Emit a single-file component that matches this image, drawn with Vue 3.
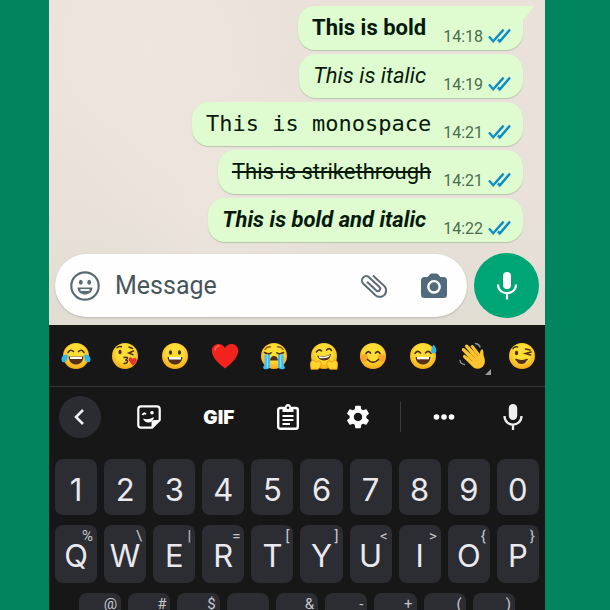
<template>
    <div class="page">
        <main class="phone">
            <section class="chat">
                <ul class="messages">
                    <li
                        v-for="(message, index) in messages"
                        :key="message.text"
                        class="bubble"
                        :class="{ 'has-tail': index === 0 }"
                    >
                        <span class="bubble-text" :class="message.style">{{ message.text }}</span>
                        <span class="bubble-meta">
                            <time>{{ message.time }}</time>
                            <svg class="ticks" width="23" height="16" viewBox="0 0 23 16" fill="none" stroke="#0e8fc4" stroke-width="2.4">
                                <path d="M1 8.5 L5.2 13.2 L15.6 1.6"></path>
                                <path d="M9.8 11.4 L11.8 13.4 L22 1.6"></path>
                            </svg>
                        </span>
                    </li>
                </ul>

                <form class="composer" @submit.prevent>
                    <div class="composer-field">
                        <button type="button" class="plain-button" aria-label="Emoji">
                            <svg width="32" height="32" viewBox="0 0 32 32" fill="none" stroke="#5b6b74" stroke-width="2.2">
                                <circle cx="16" cy="16" r="13.7"></circle>
                                <path d="M8.5 17.5 H23.500 C23 22.500 19.800 24.500 16 24.500 S9 22.500 8.500 17.500 Z" fill="#5b6b74" stroke="none"></path>
                                <path d="M11.5 20 H20.5" stroke="#fff" stroke-width="1.8"></path>
                                <ellipse cx="11.8" cy="12.3" rx="1.9" ry="2.5" fill="#5b6b74" stroke="none"></ellipse>
                                <ellipse cx="20.2" cy="12.3" rx="1.9" ry="2.5" fill="#5b6b74" stroke="none"></ellipse>
                            </svg>
                        </button>
                        <input v-model="draft" class="composer-input" type="text" placeholder="Message" aria-label="Message">
                        <button type="button" class="plain-button" aria-label="Attach">
                            <svg width="32" height="32" viewBox="0 0 24 24" fill="#5b6b74">
                                <g transform="rotate(-47 12 12)">
                                    <path d="M16.5 6v11.5c0 2.21-1.79 4-4 4s-4-1.79-4-4V5a2.5 2.5 0 0 1 5 0v10.5c0 .55-.45 1-1 1s-1-.45-1-1V6H10v9.5a2.5 2.5 0 0 0 5 0V5c0-2.21-1.79-4-4-4S7 2.79 7 5v12.5c0 3.04 2.46 5.5 5.5 5.5s5.5-2.46 5.5-5.5V6h-1.5z"></path>
                                </g>
                            </svg>
                        </button>
                        <button type="button" class="plain-button" aria-label="Camera">
                            <svg width="28" height="28" viewBox="0 0 28 28">
                                <path d="M4.5 5 H7.5 L10 2.2 Q10.7 1.5 11.8 1.5 H16.2 Q17.3 1.5 18 2.2 L20.5 5 H23.5 Q27 5 27 8.5 V22.5 Q27 26 23.5 26 H4.5 Q1 26 1 22.5 V8.5 Q1 5 4.5 5 Z" fill="#526b7c"></path>
                                <circle cx="14" cy="14.8" r="5.7" fill="none" stroke="#fff" stroke-width="2.4"></circle>
                            </svg>
                        </button>
                    </div>
                    <button type="button" class="voice-button" aria-label="Record voice message">
                        <svg width="24" height="32" viewBox="0 0 24 32">
                            <rect x="8" y="2" width="8" height="17" rx="4" fill="#fff"></rect>
                            <path d="M3 14.5 C3 26 21 26 21 14.5 M12 23 V29.5" fill="none" stroke="#fff" stroke-width="2.2"></path>
                        </svg>
                    </button>
                </form>
            </section>

            <section class="keyboard">
                <div class="emoji-strip">
                    <button v-for="emoji in emojis" :key="emoji" type="button" class="emoji" :aria-label="emoji">
                        <svg width="28" height="28" viewBox="0 0 28 28" fill="none" stroke-linecap="round">
                            <defs>
                                <radialGradient :id="`skin-${emoji}`" cx="50%" cy="38%" r="62%">
                                    <stop offset="0.5" stop-color="#ffdd35"></stop>
                                    <stop offset="1" stop-color="#f5a91c"></stop>
                                </radialGradient>
                            </defs>
                            <circle v-if="emoji !== 'heart' && emoji !== 'wave'" cx="14" cy="14" r="13" :fill="`url(#skin-${emoji})`"></circle>
                            <g v-if="emoji === 'joy'">
                                <path d="M6 10.5 Q8.5 6.5 11.5 9.5 M16.5 9.5 Q19.5 6.5 22 10.5" stroke="#4e3016" stroke-width="1.6"></path>
                                <path d="M6.5 14.5 H21.5 C21 20.5 17.5 22.5 14 22.5 S7 20.5 6.5 14.5 Z" fill="#54301a"></path>
                                <path d="M8 14.8 H20 V17 H8 Z" fill="#fff"></path>
                                <path d="M5.8 12.5 C0 12 -2 17 0.5 20 C4 21 6 18 5.8 12.5 Z M22.2 12.5 C28 12 30 17 27.5 20 C24 21 22 18 22.2 12.5 Z" fill="#35b5ea"></path>
                            </g>
                            <g v-else-if="emoji === 'kiss'">
                                <ellipse cx="9" cy="10" rx="1.6" ry="2.3" fill="#4e3016"></ellipse>
                                <path d="M6 5.8 Q8 3.7 10.5 4.8 M18 5 L21.5 6.5 M22.5 9 L17.8 11 L22 12.8 M13 15.5 Q17.5 14.5 16 17 Q15.5 18 14 18 Q18 18 16 20.5 Q15.2 21.5 13 21.5" stroke="#4e3016" stroke-width="1.5"></path>
                                <path d="M22 24 L17.8 18.5 C16.5 15.5 20.5 14 21.5 17 C23.5 14.5 27 17 25.5 19.5 Z" fill="#e8322f"></path>
                            </g>
                            <g v-else-if="emoji === 'grin'">
                                <ellipse cx="9.5" cy="10.5" rx="1.6" ry="2.2" fill="#4e3016"></ellipse>
                                <ellipse cx="18.5" cy="10.5" rx="1.6" ry="2.2" fill="#4e3016"></ellipse>
                                <path d="M6.5 15 H21.5 C21 20.5 17.5 22.5 14 22.5 S7 20.5 6.5 15 Z" fill="#54301a"></path>
                                <path d="M8 15 H20 V17.5 H8 Z" fill="#fff"></path>
                            </g>
                            <g v-else-if="emoji === 'heart'">
                                <path d="M14 26.5 C10 23 0.8 16.5 0.8 8.7 C0.8 1 11 -0.5 14 6 C17 -0.5 27.2 1 27.2 8.7 C27.2 16.5 18 23 14 26.5 Z" fill="#f1231c"></path>
                                <path d="M4 8 Q4.5 4.5 8 4" stroke="#ff6258" stroke-width="1.5"></path>
                            </g>
                            <g v-else-if="emoji === 'sob'">
                                <path d="M5 7.5 Q7 4.5 10.5 4.8 M17.5 4.8 Q21 4.5 23 7.5" stroke="#805013" stroke-width="1.3"></path>
                                <path d="M4.5 10.5 Q8 13 11 10.8 M17 10.8 Q20 13 23.5 10.5" stroke="#4e3016" stroke-width="1.6"></path>
                                <path d="M10 18.5 Q10.5 14 14 14 T18 18.5 Z" fill="#54301a"></path>
                                <path d="M4.5 12.8 H10 V24.5 Q9 28 4 27 Q2 25.5 4.5 23 Z M18 12.8 H23.5 V23 Q26 25.5 24 27 Q19 28 18 24.5 Z" fill="#42bde9"></path>
                                <path d="M7.3 13 V25 M20.7 13 V25" stroke="#86dcf6" stroke-width="1.3"></path>
                            </g>
                            <g v-else-if="emoji === 'hug'">
                                <path d="M6.5 10 Q8.5 6.5 11.5 8.8 M16.5 8 Q19.5 5 21.5 8.5" stroke="#4e3016" stroke-width="1.6"></path>
                                <path d="M7 13.5 Q14 15.5 21 12 Q20 18.5 14.5 18.5 Q9 18.5 7 13.5 Z" fill="#54301a"></path>
                                <path d="M8.5 14 Q14 15.8 19.8 13 L19 15 Q14 17 9.5 16 Z" fill="#fff"></path>
                                <path d="M1 27 Q-1 19 3 18 L6.5 20 Q10 17.5 10.5 20 Q13 22 8.5 27 Z M27 27 Q29 19 25 18 L21.5 20 Q18 17.5 17.5 20 Q15 22 19.5 27 Z" fill="#ffd42c" stroke="#e39a17" stroke-width="0.9"></path>
                            </g>
                            <g v-else-if="emoji === 'blush'">
                                <circle cx="5.5" cy="16" r="3.8" fill="#f7922d" opacity="0.7"></circle>
                                <circle cx="22.5" cy="16" r="3.8" fill="#f7922d" opacity="0.7"></circle>
                                <path d="M7 11.5 Q9 8 11.5 11 M16.5 11 Q19 8 21 11.5 M8.5 17.5 Q14 23 19.5 17.5" stroke="#4e3016" stroke-width="1.7"></path>
                            </g>
                            <g v-else-if="emoji === 'sweat'">
                                <path d="M6 11.5 Q8.5 7.5 11.5 11 M16.5 11 Q19.5 7.5 22 11.5" stroke="#4e3016" stroke-width="1.6"></path>
                                <path d="M6.5 15 H21.5 C21 20.5 17.5 22.5 14 22.5 S7 20.5 6.5 15 Z" fill="#54301a"></path>
                                <path d="M8 15 H20 V17.3 H8 Z" fill="#fff"></path>
                                <path d="M24.5 2.5 Q28.5 7.5 27 10 Q25 12.5 22.5 10.5 Q21 8 24.5 2.5 Z" fill="#35b5ea"></path>
                            </g>
                            <g v-else-if="emoji === 'wave'">
                                <path d="M14.5 25.5 L4.5 15.8 Q3 13.5 5.5 12.8 L10 16 L3 8.5 Q2.2 5.8 5 6 L12.5 12.5 L5.8 4.6 Q6 2 8.5 2.8 L16 10.5 L11.5 4.5 Q12 2.3 14.2 3.3 L21 12 Q21 7 23.5 7.5 Q24.5 8 24.5 13 Q27.5 21 24 24.5 Q19.5 28.5 14.5 25.5 Z" fill="#fcc52d"></path>
                                <path d="M10 16 L13 19 M12.5 12.5 L16 16 M16 10.5 L19 14" stroke="#d9921d" stroke-width="1"></path>
                                <path d="M16.5 1.5 Q20 2 21 5 M1 18.5 Q1.5 22 5.5 22.5" stroke="#8d9498" stroke-width="1.4"></path>
                            </g>
                            <g v-else>
                                <ellipse cx="8.5" cy="11" rx="1.7" ry="2.3" fill="#4e3016"></ellipse>
                                <path d="M5 6.5 Q7 4 9.5 5 M17.5 7 L22 8 M23 10 L17.5 11.5 L22.5 13 M8 17.5 Q13 20 19 17.5" stroke="#4e3016" stroke-width="1.6"></path>
                                <path d="M8 17.5 Q13 20 19 17.5 Q17.5 22 13.5 22 Q9.5 22 8 17.5 Z" fill="#54301a"></path>
                            </g>
                        </svg>
                        <span v-if="emoji === 'wave'" class="variant-mark"></span>
                    </button>
                </div>

                <div class="toolbar">
                    <button type="button" class="tool is-round" aria-label="Back">
                        <svg width="20" height="20" viewBox="0 0 20 20" fill="none" stroke="#eceef2" stroke-width="2.6">
                            <path d="M13 3 L6 10 L13 17"></path>
                        </svg>
                    </button>
                    <button type="button" class="tool" aria-label="Stickers">
                        <svg width="26" height="26" viewBox="0 0 26 26" fill="none" stroke="#fff" stroke-width="2.2">
                            <path d="M5 2.3 H21 Q23.7 2.3 23.7 5 V16 L16 23.7 H5 Q2.3 23.7 2.3 21 V5 Q2.3 2.3 5 2.3 Z" stroke-linejoin="round"></path>
                            <path d="M15.5 24 V19 Q15.5 16 19 16 H24 Z" fill="#fff" stroke="none"></path>
                            <path d="M7 14.5 Q12 16.5 18 13 Q17 18.5 12.5 18.5 Q8.500 18.500 7 14.500 Z" fill="#fff" stroke="none"></path>
                            <path d="M6.5 11 Q8 8 9.8 10.5" stroke-width="2"></path>
                            <circle cx="16" cy="8.8" r="1.8" fill="#fff" stroke="none"></circle>
                        </svg>
                    </button>
                    <button type="button" class="tool tool-gif">GIF</button>
                    <button type="button" class="tool" aria-label="Clipboard">
                        <svg width="26" height="28" viewBox="0 0 26 28" fill="none" stroke="#fff" stroke-width="2.4">
                            <rect x="3.2" y="5" width="19.6" height="20.8" rx="2"></rect>
                            <path d="M7.5 4.500 H9.800 Q10.200 1 13 1 T16.200 4.500 H18.500 V9 H7.500 Z" fill="#fff" stroke="none"></path>
                            <circle cx="13" cy="4.8" r="1.3" fill="#171717" stroke="none"></circle>
                            <path d="M7.5 13 H18.5 M7.5 17 H18.5 M7.5 21 H15" stroke-width="2"></path>
                        </svg>
                    </button>
                    <button type="button" class="tool" aria-label="Settings">
                        <svg width="28" height="28" viewBox="0 0 24 24" fill="#fff">
                            <path d="M19.14 12.94c.04-.3.06-.61.06-.94 0-.32-.02-.64-.07-.94l2.03-1.58c.18-.14.23-.41.12-.61l-1.92-3.32c-.12-.22-.37-.29-.59-.22l-2.39.96c-.5-.38-1.03-.7-1.62-.94l-.36-2.54c-.04-.24-.24-.41-.48-.41h-3.84c-.24 0-.43.17-.47.41l-.36 2.54c-.59.24-1.13.57-1.62.94l-2.39-.96c-.22-.08-.47 0-.59.22L2.74 8.87c-.12.21-.08.47.12.61l2.03 1.58c-.05.3-.09.63-.09.94s.02.64.07.94l-2.03 1.58c-.18.14-.23.41-.12.61l1.92 3.32c.12.22.37.29.59.22l2.39-.96c.5.38 1.03.7 1.62.94l.36 2.54c.05.24.24.41.48.41h3.84c.24 0 .44-.17.47-.41l.36-2.54c.59-.24 1.13-.56 1.62-.94l2.39.96c.22.08.47 0 .59-.22l1.92-3.32c.12-.22.07-.47-.12-.61l-2.01-1.58zM12 15.6c-1.98 0-3.6-1.62-3.6-3.6s1.62-3.6 3.6-3.6 3.6 1.62 3.6 3.6-1.62 3.6-3.6 3.6z"></path>
                        </svg>
                    </button>
                    <span class="tool-divider"></span>
                    <button type="button" class="tool" aria-label="More">
                        <svg width="22" height="8" viewBox="0 0 22 8" fill="#fff">
                            <circle cx="3.5" cy="4" r="2.8"></circle>
                            <circle cx="11" cy="4" r="2.8"></circle>
                            <circle cx="18.5" cy="4" r="2.8"></circle>
                        </svg>
                    </button>
                    <button type="button" class="tool" aria-label="Voice typing">
                        <svg width="22" height="28" viewBox="0 0 22 28">
                            <rect x="6.8" y="1" width="8.4" height="16" rx="4.2" fill="#eee"></rect>
                            <path d="M2.5 13 C2.5 24.5 19.5 24.5 19.5 13 M11 21.5 V27" fill="none" stroke="#eee" stroke-width="2.3"></path>
                        </svg>
                    </button>
                </div>

                <div class="keys">
                    <div v-for="(row, index) in rows" :key="index" class="key-row" :class="`row-${index + 1}`">
                        <button v-for="(key, i) in row" :key="i" type="button" class="key">
                            {{ key.label }}
                            <span v-if="key.hint" class="key-hint">{{ key.hint }}</span>
                        </button>
                    </div>
                </div>
            </section>
        </main>
    </div>
</template>

<script setup>
import { ref } from 'vue';

const draft = ref('');

const messages = [
    { text: 'This is bold', time: '14:18', style: 'is-bold' },
    { text: 'This is italic', time: '14:19', style: 'is-italic' },
    { text: 'This is monospace', time: '14:21', style: 'is-mono' },
    { text: 'This is strikethrough', time: '14:21', style: 'is-strike' },
    { text: 'This is bold and italic', time: '14:22', style: 'is-bold is-italic' },
];

const emojis = ['joy', 'kiss', 'grin', 'heart', 'sob', 'hug', 'blush', 'sweat', 'wave', 'wink'];

const makeRow = (labels, hints = '') =>
    [...labels].map((label, i) => ({ label: label.trim(), hint: (hints[i] || '').trim() }));

const rows = [
    makeRow('1234567890'),
    makeRow('QWERTYUIOP', '%\\|=[]<>{}'),
    makeRow('         ', '@#$ &-+()'),
];
</script>

<style>
body {
    margin: 0;
    background: #00855f;
}
</style>

<style scoped>
.page {
    display: flex;
    height: 100vh;
    padding: 0 65px 0 49px;
    overflow: hidden;
    box-sizing: border-box;
    background: #00855f;
    font-family: Roboto, "Liberation Sans", sans-serif;
}

.phone {
    flex: 1;
    min-width: 0;
}

button {
    padding: 0;
    border: 0;
    background: none;
    font: inherit;
    color: inherit;
}

svg {
    display: block;
    overflow: visible;
}

/* Chat */
.chat {
    padding: 6px 6px 7px;
    background:
        radial-gradient(circle at 20% 15%, #eee6df 0, transparent 30%),
        radial-gradient(circle at 35% 60%, #ece4dd 0, transparent 35%),
        linear-gradient(#eae1da 60%, #e1ddd3);
}

.messages {
    display: flex;
    flex-direction: column;
    align-items: flex-end;
    gap: 4px;
    margin: 0 0 11px;
    padding: 0 16px 0 0;
    list-style: none;
}

.bubble {
    position: relative;
    display: flex;
    align-items: center;
    gap: 12px;
    height: 44px;
    padding: 0 12px 0 14px;
    box-sizing: border-box;
    border-radius: 17px;
    background: #defcd0;
    box-shadow: 0 1px 1px #b9c4a9;
}

.bubble.has-tail {
    border-top-right-radius: 0;
}

.bubble.has-tail::after {
    content: "";
    position: absolute;
    top: 0;
    right: -10px;
    width: 11px;
    height: 16px;
    background: #defcd0;
    clip-path: polygon(0 0, 100% 0, 100% 10%, 20% 80%, 0 100%);
}

.bubble-text {
    font-size: 22px;
    line-height: 44px;
    color: #07190c;
    white-space: nowrap;
}

.is-bold {
    font-weight: 700;
}

.is-italic {
    font-style: italic;
}

.is-bold,
.is-italic {
    margin-right: 5px;
}

.is-mono {
    font-family: "DejaVu Sans Mono", "Liberation Mono", monospace;
}

.is-strike {
    text-decoration: line-through;
}

.bubble-meta {
    display: flex;
    align-items: center;
    gap: 5px;
    padding-top: 17px;
    font-size: 16px;
    line-height: 20px;
    color: #4f6b4e;
}

.ticks {
    padding-bottom: 2px;
}

/* Composer */
.composer {
    display: flex;
    align-items: center;
    gap: 7px;
}

.composer-field {
    display: flex;
    flex: 1;
    align-items: center;
    min-width: 0;
    height: 63px;
    padding: 0 19px 0 14px;
    box-sizing: border-box;
    border-radius: 32px;
    background: #fefefe;
    box-shadow: 0 1px 2px #bbb6ad;
}

.composer-input {
    flex: 1;
    min-width: 0;
    padding: 0 14px;
    border: 0;
    outline: 0;
    background: none;
    font-family: inherit;
    font-size: 25px;
    line-height: 32px;
    color: #3d494f;
}

.composer-input::placeholder {
    color: #48555b;
    opacity: 1;
}

.plain-button + .plain-button {
    margin-left: 30px;
}

.voice-button {
    display: flex;
    align-items: center;
    justify-content: center;
    width: 65px;
    height: 65px;
    border-radius: 50%;
    background: #00a576;
}

/* Keyboard */
.keyboard {
    background: #171717;
}

.emoji-strip {
    display: flex;
    height: 61px;
    border-bottom: 1px solid #343434;
}

.emoji {
    position: relative;
    display: flex;
    flex: 1;
    align-items: center;
    justify-content: center;
    padding-left: 4px;
}

.variant-mark {
    position: absolute;
    right: 4px;
    bottom: 11px;
    border-bottom: 6px solid #9a9a9a;
    border-left: 6px solid transparent;
}

.toolbar {
    display: flex;
    align-items: center;
    justify-content: space-between;
    height: 60px;
    padding: 0 11px 0 10px;
}

.tool {
    display: flex;
    align-items: center;
    justify-content: center;
    width: 42px;
    height: 42px;
    color: #fff;
}

.tool.is-round {
    border-radius: 50%;
    background: #2b2c32;
}

.tool-gif {
    font-family: Inter, sans-serif;
    font-size: 19px;
    font-weight: 900;
}

.tool-divider {
    width: 1px;
    height: 30px;
    margin: 0 -6px;
    background: #3b3b3b;
}

.keys {
    display: flex;
    flex-direction: column;
    gap: 10px;
    padding: 12px 6px;
}

.key-row {
    display: flex;
    gap: 7px;
}

.row-3 {
    padding: 0 24px;
}

.key {
    position: relative;
    flex: 1;
    height: 58px;
    padding-top: 4px;
    border-radius: 8px;
    background: #2c2d32;
    font-family: Inter, "Open Sans", sans-serif;
    font-size: 31px;
    line-height: 54px;
    color: #e9e9ee;
}

.row-1 .key {
    height: 56px;
}

.key-hint {
    position: absolute;
    top: 2px;
    right: 4px;
    font-family: Roboto, sans-serif;
    font-size: 15px;
    line-height: 18px;
    color: #c6c6ca;
}
</style>
